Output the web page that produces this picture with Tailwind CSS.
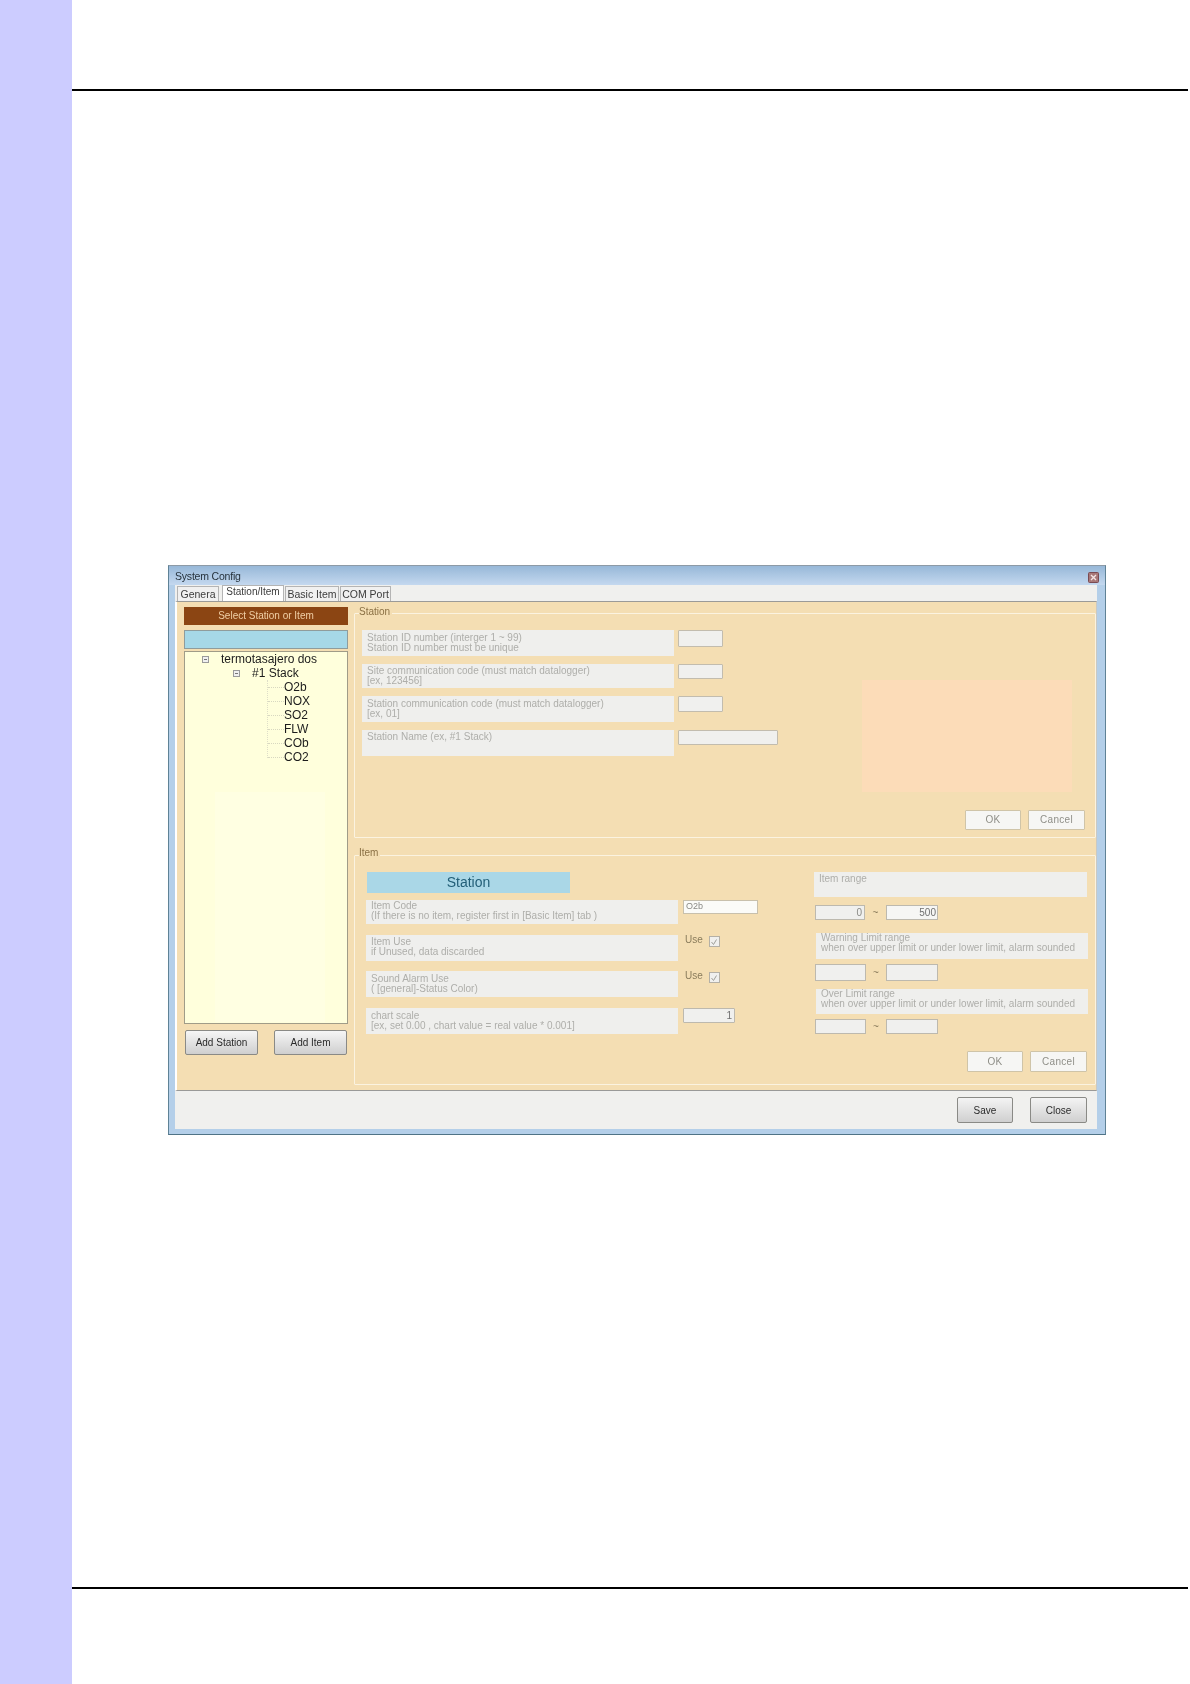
<!DOCTYPE html>
<html lang="en">
  <head>
    <meta charset="UTF-8" />
    <title>System Config</title>
    <script src="https://cdn.jsdelivr.net/npm/@tailwindcss/browser@4"></script>
  </head>

  <body class="bg-white font-['Liberation_Sans',Arial,sans-serif]">
    <div class="flex w-[1190px] h-[1684px] overflow-hidden">
      <!-- Side strip -->
      <div class="w-[72px] shrink-0 bg-[#ccccff]"></div>

      <!-- Page -->
      <div class="w-[1116px] flex flex-col">
        <div class="h-[91px] border-b-2 border-black"></div>

        <!-- Dialog -->
        <div class="ml-[96px] mt-[474px] w-[938px] h-[570px] border border-t-[#8d9aa6] border-x-[#5f8296] border-b-[#4f7386] bg-[#b4cfe9] flex flex-col blur-[0.45px]">
          <div class="h-[19px] shrink-0 bg-gradient-to-b from-[#97b8d8] to-[#c4d8ef] pl-[6px] pr-[6px] flex items-center justify-between">
            <span class="text-[10.5px] text-[#26323c] tracking-[-0.2px] mt-[3px]">System Config</span>
            <svg class="mt-[3px]" width="11" height="11" viewBox="0 0 11 11">
              <rect x="0.5" y="0.5" width="10" height="10" rx="1" fill="#a87878" stroke="#7a4a52" />
              <path d="M3 3l5 5M8 3l-5 5" stroke="#f4e4e4" stroke-width="1.4" />
            </svg>
          </div>

          <div class="flex-1 ml-[6px] mr-[8px] flex flex-col min-h-0">
            <!-- Tabs -->
            <div class="h-[16px] shrink-0 bg-[#f0f0ee] flex items-end pl-[2px] gap-[1px] text-[10.5px] text-[#3c3c3c]">
              <div class="w-[42px] h-[15px] bg-[#f0f0f0] border border-b-0 border-[#b4b4b4] text-center leading-[15px] mr-[2px]">Genera</div>
              <div class="w-[62px] h-[16px] bg-white border border-b-0 border-[#b4b4b4] text-center leading-[12px] text-[10px]">Station/Item</div>
              <div class="w-[54px] h-[15px] bg-[#f0f0f0] border border-b-0 border-[#b4b4b4] text-center leading-[15px]">Basic Item</div>
              <div class="w-[51px] h-[15px] bg-[#f0f0f0] border border-b-0 border-[#b4b4b4] text-center leading-[15px]">COM Port</div>
            </div>

            <!-- Panel -->
            <div class="h-[490px] shrink-0 bg-[#f4deb3] border-t border-b border-[#9a9a98] border-r border-l-2 border-l-white border-r-[#c9c9c4] flex pl-[7px] pt-[5px]">
              <!-- Tree column -->
              <div class="w-[164px] shrink-0 flex flex-col">
                <div class="h-[18px] bg-[#8b4513] text-[#f0cfa6] text-[10px] leading-[18px] text-center">Select Station or Item</div>
                <div class="h-[19px] mt-[5px] bg-[#a6d8e7] border border-[#8f9c9c]"></div>
                <div class="relative h-[373px] mt-[2px] bg-[#ffffdc] border border-[#a09c88] text-[12px] leading-[14px] text-[#1c1c1c] overflow-hidden">
                  <div class="absolute left-[30px] top-[140px] w-[110px] h-[230px] bg-[#ffffe2]"></div>
                  <div class="relative flex items-center pl-[17px] gap-[12px] h-[14px]">
                    <span class="w-[7px] h-[7px] border border-[#9a9a9a] bg-[#f0f0f0] flex items-center justify-center"><span class="w-[3px] h-px bg-[#777]"></span></span>
                    <span>termotasajero dos</span>
                  </div>
                  <div class="relative flex items-center pl-[48px] gap-[12px] h-[14px]">
                    <span class="w-[7px] h-[7px] border border-[#9a9a9a] bg-[#f0f0f0] flex items-center justify-center"><span class="w-[3px] h-px bg-[#777]"></span></span>
                    <span>#1 Stack</span>
                  </div>
                  <div class="relative ml-[82px] border-l border-dotted border-[#dedec8] h-[78px] flex flex-col">
                    <div class="flex items-center h-[14px]"><span class="w-[16px] border-t border-dotted border-[#d8d8c0]"></span><span>O2b</span></div>
                    <div class="flex items-center h-[14px]"><span class="w-[16px] border-t border-dotted border-[#d8d8c0]"></span><span>NOX</span></div>
                    <div class="flex items-center h-[14px]"><span class="w-[16px] border-t border-dotted border-[#d8d8c0]"></span><span>SO2</span></div>
                    <div class="flex items-center h-[14px]"><span class="w-[16px] border-t border-dotted border-[#d8d8c0]"></span><span>FLW</span></div>
                    <div class="flex items-center h-[14px]"><span class="w-[16px] border-t border-dotted border-[#d8d8c0]"></span><span>COb</span></div>
                    <div class="flex items-center h-[14px]"><span class="w-[16px] border-t border-dotted border-[#d8d8c0]"></span><span>CO2</span></div>
                  </div>
                </div>
                <div class="flex justify-between mt-[6px] pl-[1px] pr-[1px]">
                  <button class="w-[73px] h-[25px] rounded-[2px] border border-[#8a8a86] bg-gradient-to-b from-[#f6f6f6] to-[#cfcfcf] text-[10px] text-[#2a2a2a]">Add Station</button>
                  <button class="w-[73px] h-[25px] rounded-[2px] border border-[#8a8a86] bg-gradient-to-b from-[#f6f6f6] to-[#cfcfcf] text-[10px] text-[#2a2a2a]">Add Item</button>
                </div>
              </div>

              <!-- Groups -->
              <div class="flex-1 ml-[6px] mt-[6px] flex flex-col text-[10px] leading-[10px] text-[#aeaeaa]">
                <!-- Station group -->
                <div class="relative h-[225px] border border-[#fbf3e0] rounded-[1px] flex pl-[7px] pt-[16px]">
                  <span class="absolute left-[4px] -top-[8px] bg-[#f4deb3] pr-[2px] text-[#8a7044] leading-[12px]">Station</span>
                  <div class="w-[416px] shrink-0 flex flex-col gap-[8px]">
                    <div class="flex gap-[4px]">
                      <div class="w-[312px] h-[26px] bg-[#efefed] pl-[5px] pt-[3px]">Station ID number (interger 1 ~ 99)<br />Station ID number must be unique</div>
                      <div class="w-[45px] h-[17px] bg-[#f0f0ee] border border-[#c2bcae] rounded-[1px]"></div>
                    </div>
                    <div class="flex gap-[4px]">
                      <div class="w-[312px] h-[24px] bg-[#efefed] pl-[5px] pt-[2px]">Site communication code (must match datalogger)<br />[ex, 123456]</div>
                      <div class="w-[45px] h-[15px] bg-[#f0f0ee] border border-[#c2bcae] rounded-[1px]"></div>
                    </div>
                    <div class="flex gap-[4px]">
                      <div class="w-[312px] h-[26px] bg-[#efefed] pl-[5px] pt-[3px]">Station communication code (must match datalogger)<br />[ex, 01]</div>
                      <div class="w-[45px] h-[16px] bg-[#f0f0ee] border border-[#c2bcae] rounded-[1px]"></div>
                    </div>
                    <div class="flex gap-[4px]">
                      <div class="w-[312px] h-[26px] bg-[#efefed] pl-[5px] pt-[2px]">Station Name (ex, #1 Stack)</div>
                      <div class="w-[100px] h-[15px] bg-[#f0f0ee] border border-[#c2bcae] rounded-[1px]"></div>
                    </div>
                  </div>
                  <div class="ml-[84px] w-[223px] flex flex-col pt-[50px]">
                    <div class="w-[210px] h-[112px] bg-[#fcdcb8]"></div>
                    <div class="flex justify-end gap-[7px] mt-[18px] text-[#8f8f88]">
                      <button class="w-[56px] h-[20px] bg-[#f6f6f4] border border-[#cfc4a8] rounded-[1px] tracking-[0.3px]">OK</button>
                      <button class="w-[57px] h-[20px] bg-[#f6f6f4] border border-[#cfc4a8] rounded-[1px] tracking-[0.3px]">Cancel</button>
                    </div>
                  </div>
                </div>

                <!-- Item group -->
                <div class="relative h-[230px] mt-[17px] border border-[#fbf3e0] rounded-[1px] flex pl-[11px] pt-[16px]">
                  <span class="absolute left-[4px] -top-[9px] bg-[#f4deb3] pr-[2px] text-[#8a7044] leading-[12px]">Item</span>
                  <div class="w-[392px] shrink-0 flex flex-col">
                    <div class="ml-[1px] w-[203px] h-[21px] bg-[#aad7e7] text-[#235f78] text-[14px] leading-[21px] text-center">Station</div>
                    <div class="flex gap-[5px] mt-[7px]">
                      <div class="w-[312px] h-[24px] bg-[#efefed] pl-[5px] pt-[1px]">Item Code<br />(If there is no item, register first in [Basic Item] tab )</div>
                      <div class="w-[75px] h-[14px] bg-[#fbfbf8] border border-[#c8c0ac] text-[9px] leading-[11px] pl-[2px] text-[#8a8a86]">O2b</div>
                    </div>
                    <div class="flex gap-[5px] mt-[11px]">
                      <div class="w-[312px] h-[26px] bg-[#efefed] pl-[5px] pt-[2px]">Item Use<br />if Unused, data discarded</div>
                      <div class="flex gap-[6px] pl-[2px] text-[#8a7c5c] h-[12px]">
                        <span>Use</span>
                        <span class="w-[11px] h-[11px] mt-[1px] bg-[#f0f0ee] border border-[#b4b0a6] flex items-center justify-center"><svg width="8" height="8" viewBox="0 0 8 8"><path d="M1.5 4l2 2.5L6.5 1.5" fill="none" stroke="#a0a09a" stroke-width="1" /></svg></span>
                      </div>
                    </div>
                    <div class="flex gap-[5px] mt-[10px]">
                      <div class="w-[312px] h-[26px] bg-[#efefed] pl-[5px] pt-[3px]">Sound Alarm Use<br />( [general]-Status Color)</div>
                      <div class="flex gap-[6px] pl-[2px] text-[#8a7c5c] h-[12px]">
                        <span>Use</span>
                        <span class="w-[11px] h-[11px] mt-[1px] bg-[#f0f0ee] border border-[#b4b0a6] flex items-center justify-center"><svg width="8" height="8" viewBox="0 0 8 8"><path d="M1.5 4l2 2.5L6.5 1.5" fill="none" stroke="#a0a09a" stroke-width="1" /></svg></span>
                      </div>
                    </div>
                    <div class="flex gap-[5px] mt-[11px]">
                      <div class="w-[312px] h-[26px] bg-[#efefed] pl-[5px] pt-[3px]">chart scale<br />[ex, set 0.00 , chart value = real value * 0.001]</div>
                      <div class="w-[52px] h-[15px] bg-[#f0f0ee] border border-[#bdb9ae] rounded-[1px] text-right pr-[2px] leading-[13px] text-[#707070]">1</div>
                    </div>
                  </div>

                  <div class="ml-[56px] w-[274px] flex flex-col">
                    <div class="w-[273px] h-[25px] bg-[#efefed] pl-[5px] pt-[2px]">Item range</div>
                    <div class="flex items-center ml-[1px] mt-[8px] h-[15px]">
                      <div class="w-[50px] h-[15px] bg-[#f0f0ee] border border-[#bdb9ae] text-right pr-[2px] leading-[13px] text-[#8a8a86]">0</div>
                      <span class="w-[21px] text-center text-[#8a7c5c]">~</span>
                      <div class="w-[52px] h-[15px] bg-[#f6f6f4] border border-[#bdb9ae] text-right pr-[1px] leading-[13px] text-[#707070]">500</div>
                    </div>
                    <div class="ml-[2px] w-[272px] h-[26px] mt-[13px] bg-[#efefed] pl-[5px] whitespace-nowrap">Warning Limit range<br />when over upper limit or under lower limit, alarm sounded</div>
                    <div class="flex items-center ml-[1px] mt-[5px] h-[17px]">
                      <div class="w-[51px] h-[17px] bg-[#f0f0ee] border border-[#bdb9ae]"></div>
                      <span class="w-[20px] text-center text-[#8a7c5c]">~</span>
                      <div class="w-[52px] h-[17px] bg-[#f0f0ee] border border-[#bdb9ae]"></div>
                    </div>
                    <div class="ml-[2px] w-[272px] h-[25px] mt-[8px] bg-[#efefed] pl-[5px] whitespace-nowrap">Over Limit range<br />when over upper limit or under lower limit, alarm sounded</div>
                    <div class="flex items-center ml-[1px] mt-[5px] h-[15px]">
                      <div class="w-[51px] h-[15px] bg-[#f0f0ee] border border-[#bdb9ae]"></div>
                      <span class="w-[20px] text-center text-[#8a7c5c]">~</span>
                      <div class="w-[52px] h-[15px] bg-[#f0f0ee] border border-[#bdb9ae]"></div>
                    </div>
                    <div class="flex justify-end gap-[7px] mt-[17px] text-[#8f8f88] pr-[1px]">
                      <button class="w-[56px] h-[21px] bg-[#f6f6f4] border border-[#cfc4a8] rounded-[1px] tracking-[0.3px]">OK</button>
                      <button class="w-[57px] h-[21px] bg-[#f6f6f4] border border-[#cfc4a8] rounded-[1px] tracking-[0.3px]">Cancel</button>
                    </div>
                  </div>
                </div>
              </div>
            </div>

            <!-- Footer -->
            <div class="flex-1 bg-[#f0f0ee] flex items-start justify-end gap-[17px] pt-[6px] pr-[10px]">
              <button class="w-[56px] h-[26px] rounded-[2px] border border-[#8a8a86] bg-gradient-to-b from-[#f4f4f4] to-[#d0d0d0] text-[10px] text-[#2a2a2a]">Save</button>
              <button class="w-[57px] h-[26px] rounded-[2px] border border-[#8a8a86] bg-gradient-to-b from-[#f4f4f4] to-[#d0d0d0] text-[10px] text-[#2a2a2a]">Close</button>
            </div>
          </div>
          <div class="h-[5px] shrink-0"></div>
        </div>

        <div class="mt-[452px] border-b-2 border-black"></div>
      </div>
    </div>
  </body>
</html>
